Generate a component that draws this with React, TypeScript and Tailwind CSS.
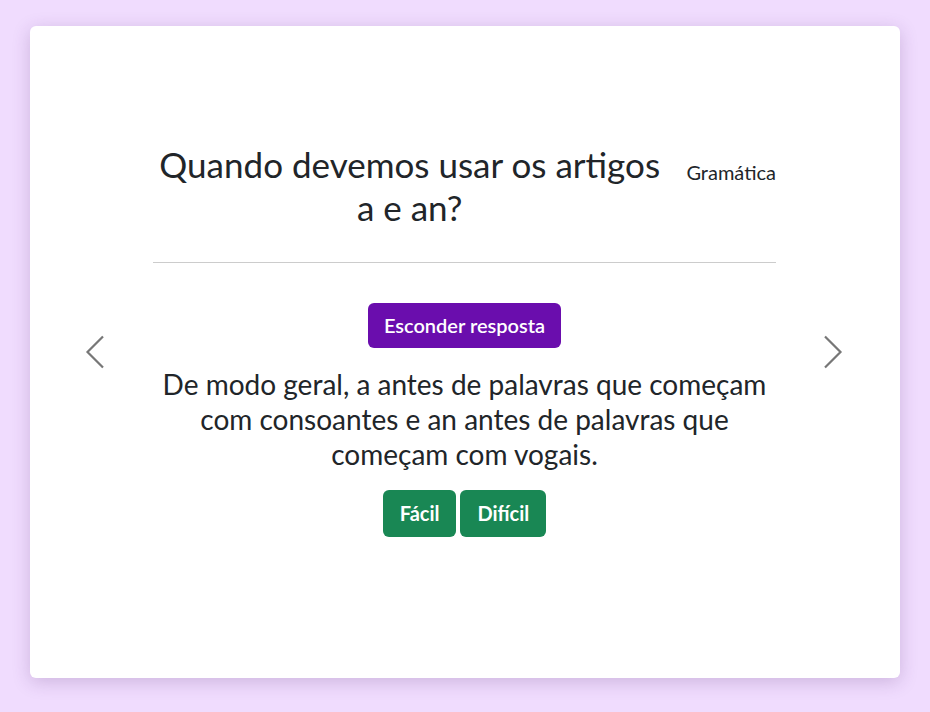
import React from "react";

function Chevron({ dir }: { dir: "left" | "right" }) {
  return (
    <svg width="20" height="34" viewBox="0 0 20 34" fill="none">
      {dir === "left" ? (
        <path d="M18 1.5 L2.5 17 L18 32.5" stroke="#777" strokeWidth="2.2" />
      ) : (
        <path d="M2 1.5 L17.5 17 L2 32.5" stroke="#777" strokeWidth="2.2" />
      )}
    </svg>
  );
}

export default function App() {
  return (
    <div
      className="min-h-[712px] w-full bg-[#f0dcfe] pt-[26px] px-[30px]"
      style={{ fontFamily: "Lato, 'Noto Sans', sans-serif" }}
    >
      <div className="h-[652px] bg-white rounded-[6px] shadow-[0_4px_18px_rgba(80,40,110,0.22)] flex items-center">
        <button className="ml-[55px] flex items-center">
          <Chevron dir="left" />
        </button>
        <div className="ml-[48px] w-[623px] flex flex-col items-center text-[#212529] -mt-[25px]">
          <div className="w-full flex items-start border-b border-[#cccccc] pb-[33px]">
            <h1 className="flex-1 text-center text-[35px] leading-[43px] font-normal">
              Quando devemos usar os artigos a e an?
            </h1>
            <span className="ml-[20px] mt-[17px] text-[20px] leading-[24px] text-[#212529]">Gramática</span>
          </div>
          <button className="mt-[40px] h-[45px] px-[16px] rounded-[6px] bg-[#6a0dad] text-white text-[20px] font-semibold">
            Esconder resposta
          </button>
          <p className="mt-[19px] text-center text-[28px] leading-[35px] text-[#212529]">
            De modo geral, a antes de palavras que começam com consoantes e an antes de palavras que começam com vogais.
          </p>
          <div className="mt-[18px] flex gap-[4px]">
            <button className="h-[47px] px-[17px] rounded-[6px] bg-[#198754] text-white text-[20px] font-bold">
              Fácil
            </button>
            <button className="h-[47px] px-[17px] rounded-[6px] bg-[#198754] text-white text-[20px] font-bold">
              Difícil
            </button>
          </div>
        </div>
        <button className="ml-[47px] flex items-center">
          <Chevron dir="right" />
        </button>
      </div>
    </div>
  );
}
